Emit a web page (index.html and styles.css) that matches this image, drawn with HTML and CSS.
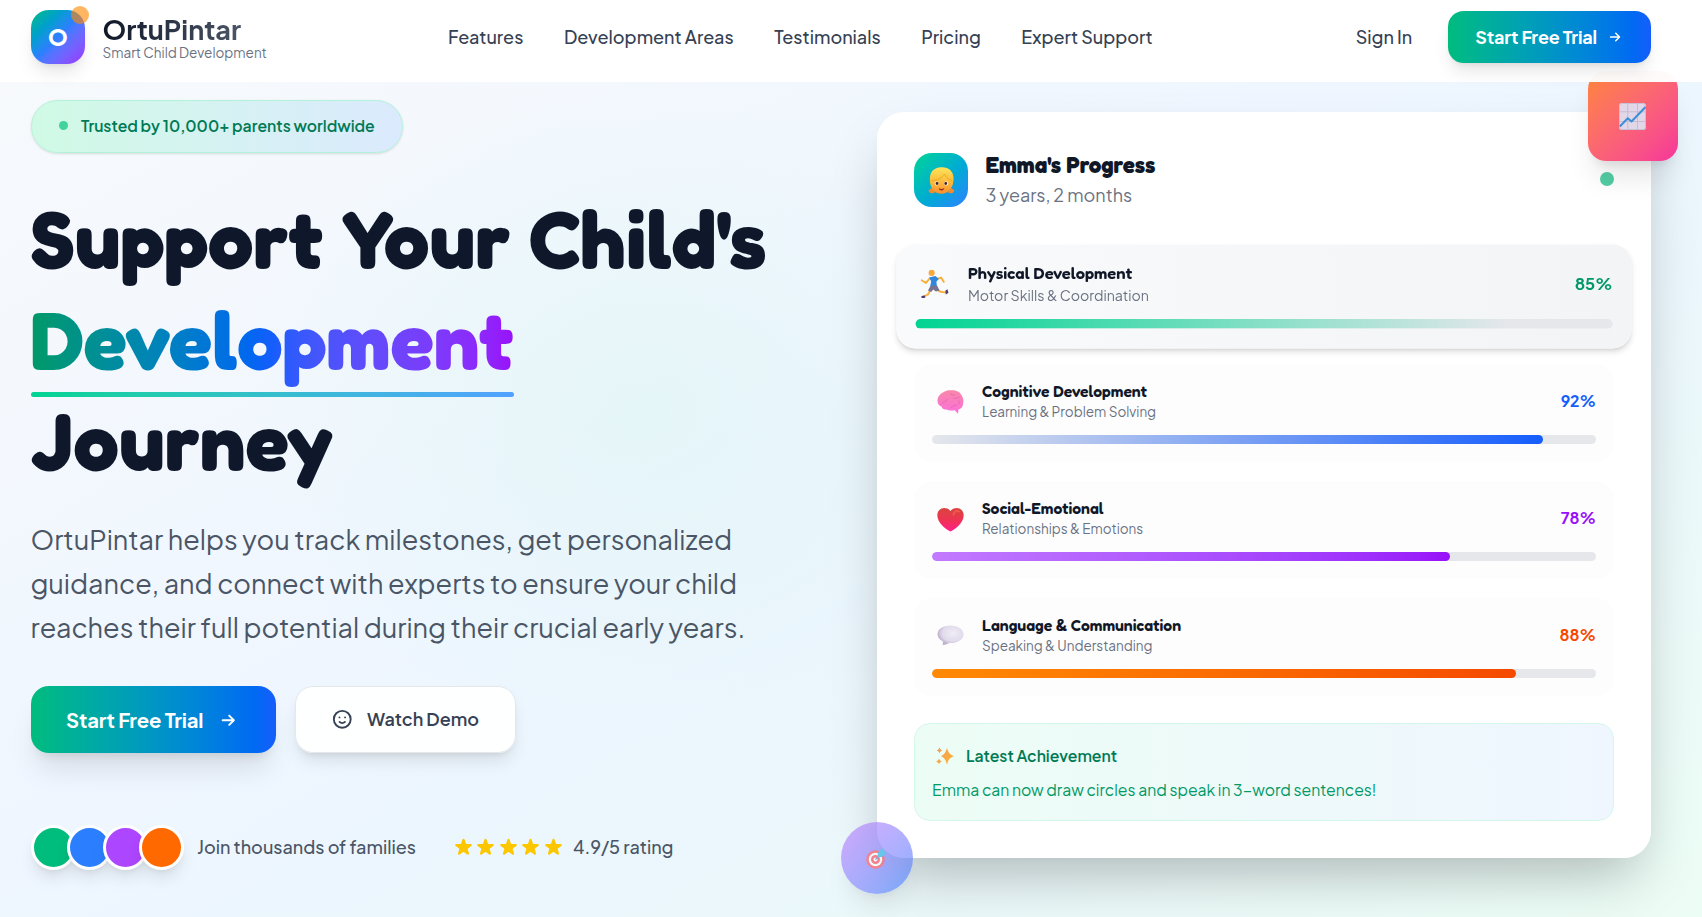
FILE: index.html
```html
<!DOCTYPE html>
<html lang="en">
<head>
<meta charset="utf-8">
<title>OrtuPintar</title>
<link rel="stylesheet" href="styles.css">
</head>
<body>
<header class="header">
  <a class="brand">
    <span class="brand-mark">O<span class="brand-dot"></span></span>
    <span class="brand-text">
      <span class="brand-name">OrtuPintar</span>
      <span class="brand-tag">Smart Child Development</span>
    </span>
  </a>
  <nav class="nav">
    <a>Features</a><a>Development Areas</a><a>Testimonials</a><a>Pricing</a><a>Expert Support</a>
  </nav>
  <div class="auth">
    <a class="signin">Sign In</a>
    <a class="btn btn-small">Start Free Trial
      <svg class="arrow" viewBox="0 0 24 24"><path d="M13 7l5 5m0 0l-5 5m5-5H6"/></svg>
    </a>
  </div>
</header>

<main class="hero">
  <section class="intro">
    <div class="badge"><span class="badge-dot"></span>Trusted by 10,000+ parents worldwide</div>
    <h1 class="title">Support Your Child's <span class="title-accent"><span class="title-gradient">Development</span></span><br>Journey</h1>
    <p class="lead">OrtuPintar helps you track milestones, get personalized guidance, and connect with experts to ensure your child reaches their full potential during their crucial early years.</p>
    <div class="actions">
      <a class="btn btn-large">Start Free Trial
        <svg class="arrow" viewBox="0 0 24 24"><path d="M13 7l5 5m0 0l-5 5m5-5H6"/></svg>
      </a>
      <a class="btn-outline">
        <svg class="smile" viewBox="0 0 24 24"><path d="M14.828 14.828a4 4 0 01-5.656 0M9 10h.01M15 10h.01M21 12a9 9 0 11-18 0 9 9 0 0118 0z"/></svg>
        Watch Demo
      </a>
    </div>
    <div class="proof">
      <div class="avatars"><i class="av av-green"></i><i class="av av-blue"></i><i class="av av-purple"></i><i class="av av-orange"></i></div>
      <span class="proof-text">Join thousands of families</span>
      <div class="stars">
        <svg viewBox="1.500 1.500 17 17"><path id="star" d="M9.049 2.927c.3-.921 1.603-.921 1.902 0l1.07 3.292a1 1 0 00.95.69h3.462c.969 0 1.371 1.24.588 1.81l-2.8 2.034a1 1 0 00-.364 1.118l1.07 3.292c.3.921-.755 1.688-1.54 1.118l-2.8-2.034a1 1 0 00-1.175 0l-2.8 2.034c-.784.57-1.838-.197-1.539-1.118l1.07-3.292a1 1 0 00-.364-1.118L2.98 8.72c-.783-.57-.38-1.81.588-1.81h3.461a1 1 0 00.951-.69l1.07-3.292z"/></svg>
        <svg viewBox="1.500 1.500 17 17"><use href="#star"/></svg>
        <svg viewBox="1.500 1.500 17 17"><use href="#star"/></svg>
        <svg viewBox="1.500 1.500 17 17"><use href="#star"/></svg>
        <svg viewBox="1.500 1.500 17 17"><use href="#star"/></svg>
      </div>
      <span class="rating">4.9/5 rating</span>
    </div>
  </section>

  <section class="card">
    <div class="card-head">
      <div class="child-avatar">
        <svg viewBox="0 0 27 27">
          <defs><linearGradient id="skin" x1="0" y1="0" x2="0" y2="1"><stop offset="0" stop-color="#ffd04a"/><stop offset="1" stop-color="#f98f2c"/></linearGradient>
          <linearGradient id="hair" x1="0" y1="0" x2="0" y2="1"><stop offset="0" stop-color="#ffe45c"/><stop offset="1" stop-color="#f5a623"/></linearGradient></defs>
          <path d="M5 20l-4.500 3.500c1 3 4 3.500 6.500 2zM22 20l4.500 3.500c-1 3-4 3.500-6.500 2z" fill="#f28a2e"/>
          <path d="M2 15C1 6 5 .5 13 .3 22-.2 27 6 25.200 15c-.3 4-2 6-3.500 7H5.500C3.500 21 2.300 18 2 15z" fill="url(#hair)"/>
          <path d="M3.300 14.500c4.500-.3 10.500-1.500 13-5.500 1.500 3 4 4.500 7.300 5 .8 7-3 12.700-10.200 12.700S2.700 21.500 3.300 14.500z" fill="url(#skin)"/>
          <path d="M3.500 13.500c6 0 11-2.500 13-6.500 1 3 4 5.500 7.500 6.500" fill="none" stroke="#f0a024" stroke-width=".8"/>
          <circle cx="8.600" cy="16.500" r="1.900" fill="#fff"/><circle cx="18.200" cy="16.500" r="1.900" fill="#fff"/>
          <circle cx="9" cy="16.500" r="1.400" fill="#3d2430"/><circle cx="17.800" cy="16.500" r="1.400" fill="#3d2430"/>
          <path d="M10.500 21q3 2 6 0-.8 2.500-3 2.500t-3-2.500z" fill="#8f2a2a"/>
        </svg>
      </div>
      <div class="child-info">
        <h2>Emma's Progress</h2>
        <p>3 years, 2 months</p>
      </div>
      <span class="status"></span>
    </div>

    <div class="areas">
      <article class="area area-active">
        <div class="area-top">
          <svg class="emoji" viewBox="0 0 27 27">
            <circle cx="10.500" cy="3" r="2.900" fill="#f7a93c"/>
            <path d="M8.500 8.500L5 12.500.900 10M15 9l4.500-1.500 2.500 4" fill="none" stroke="#fbb03b" stroke-width="1.900" stroke-linecap="round" stroke-linejoin="round"/>
            <path d="M10 18l-3 5.500-5 2.500M15 18.500l4 2.500 5.500.8" fill="none" stroke="#fbb03b" stroke-width="1.900" stroke-linecap="round" stroke-linejoin="round"/>
            <path d="M8 7.500l6-1.500 3.300 2.500-2.300 3 .5 4.500-6.500.5 1-5.500z" fill="#2f86dd"/>
            <path d="M9.300 15.500l6.300-.5 2.400 4.800-3.500 1-2.500-2-2 2.500-3-1.500z" fill="#77728f"/>
            <path d="M.700 25l3.300-.5.500 2-3.500 1.300zM23.500 20l2-1.300 1 3.300-2.500 1.500z" fill="#4a3f75"/>
          </svg>
          <div class="area-text"><h3>Physical Development</h3><p>Motor Skills &amp; Coordination</p></div>
          <b class="pct pct-green">85%</b>
        </div>
        <div class="track"><div class="fill fill-green" style="width:100%"></div></div>
      </article>
      <article class="area">
        <div class="area-top">
          <svg class="emoji" viewBox="0 0 27 27">
            <defs><linearGradient id="brain" x1="0" y1="0" x2="0" y2="1"><stop offset="0" stop-color="#f888a8"/><stop offset="1" stop-color="#fb70dc"/></linearGradient></defs>
            <path d="M.5 13C.5 8.500 3 6 6 4.500 8.500 2.500 12 2 15 2.300c4.500-.3 8.500 2 9.800 5.500 1.700 2.500 2 6 1.200 8.700-.5 3-2.500 4.700-4.500 5l-.5 4.300-3.300-3.500c-3 .5-6 .3-8-.7-3 .3-4.700-1-5.200-3C2 17.500.5 16 .5 13z" fill="url(#brain)"/>
            <path d="M5 15.500c1.500-2.500 4.500-2 5.500-4M13 5.500c1 1.500 3 2 4.500 1.200M17 10.500c2.500 0 3.500-1.500 5-1.200M14 19.500c2-.8 3-2.500 5.500-2.200M21.500 12.500c1 1 1 2.500.3 3.500" fill="none" stroke="#e45fae" stroke-width=".7" stroke-linecap="round"/>
          </svg>
          <div class="area-text"><h3>Cognitive Development</h3><p>Learning &amp; Problem Solving</p></div>
          <b class="pct pct-blue">92%</b>
        </div>
        <div class="track"><div class="fill fill-blue" style="width:92%"></div></div>
      </article>
      <article class="area">
        <div class="area-top">
          <svg class="emoji" viewBox="0 0 27 27">
            <defs><linearGradient id="heart" x1="0" y1="0" x2="0" y2="1"><stop offset="0" stop-color="#d8453f"/><stop offset=".5" stop-color="#ee3352"/><stop offset="1" stop-color="#ff1f8e"/></linearGradient></defs>
            <path d="M13.500 26.500C9 24.500.3 18 .3 10.200.3 6 3.500 3 7.200 3c2.800 0 5 1.200 6.300 3 1.300-1.800 3.500-3 6.300-3 3.700 0 6.900 3 6.900 7.200 0 7.800-8.700 14.300-13.200 16.300z" fill="url(#heart)"/>
            <path d="M16.500 9.500c.5-3 3-4.500 5.500-3" fill="none" stroke="#f0574f" stroke-width="2" stroke-linecap="round"/>
          </svg>
          <div class="area-text"><h3>Social-Emotional</h3><p>Relationships &amp; Emotions</p></div>
          <b class="pct pct-purple">78%</b>
        </div>
        <div class="track"><div class="fill fill-purple" style="width:78%"></div></div>
      </article>
      <article class="area">
        <div class="area-top">
          <svg class="emoji" viewBox="0 0 27 27">
            <defs><radialGradient id="bubble" cx=".6" cy=".4" r=".6"><stop offset="0" stop-color="#f1edf7"/><stop offset=".7" stop-color="#e0daea"/><stop offset="1" stop-color="#bdb0cd"/></radialGradient></defs>
            <path d="M13.500 3.500c7.500 0 13 3.800 13 8.800s-5.500 8.800-13 8.800l-2 .2c-1.500 1-3.500 1.800-6 1.700.6-1.200.7-2.500.3-3.700C2.500 17.800.5 15.200.5 12.300c0-5 5.500-8.800 13-8.800z" fill="url(#bubble)"/>
          </svg>
          <div class="area-text"><h3>Language &amp; Communication</h3><p>Speaking &amp; Understanding</p></div>
          <b class="pct pct-orange">88%</b>
        </div>
        <div class="track"><div class="fill fill-orange" style="width:88%"></div></div>
      </article>
    </div>

    <div class="achievement">
      <div class="achievement-title">
        <svg class="sparkles" viewBox="0 0 18 18">
          <defs><linearGradient id="spark" x1="0" y1="0" x2="1" y2="1"><stop offset="0" stop-color="#ef9a5e"/><stop offset="1" stop-color="#ffb52e"/></linearGradient></defs>
          <path d="M11 .8c1.300 4.700 2.500 6.700 7 8.500-4.500 1.700-5.700 3.500-7 8.500-1.300-5-2.500-6.800-6-8.500 3.500-1.800 4.700-3.800 6-8.500zM3.500.3c.7 2 1 2.500 3 3.200-2 .7-2.300 1-3 3-.7-2-1-2.300-3-3 2-.7 2.300-1.200 3-3.200zM3 11.300c.7 2 1 2.500 3 3.200-2 .7-2.300 1-3 3-.7-2-1-2.300-3-3 2-.7 2.300-1.200 3-3.200z" fill="url(#spark)"/>
        </svg>
        Latest Achievement
      </div>
      <p>Emma can now draw circles and speak in 3-word sentences!</p>
    </div>

    <div class="float-chart">
      <svg viewBox="0 0 27 27">
        <rect width="27" height="27" rx="3" fill="#e2d7e8"/>
        <path d="M8.800 0v27M18.500 0v27M0 8.800h27M0 18.500h27" stroke="#c9bbd2" stroke-width="1" fill="none"/>
        <rect x=".5" y=".5" width="26" height="26" rx="2.500" fill="none" stroke="#c9bfd4"/>
        <path d="M.800 23.500l8-8.300 3.700 3.300L26.500 4" fill="none" stroke="#3d8fd6" stroke-width="2" stroke-linejoin="round"/>
      </svg>
    </div>
    <div class="float-target">
      <svg viewBox="0 0 22 22">
        <circle cx="9.500" cy="12.500" r="9.300" fill="#ff4055"/><circle cx="9.500" cy="12.500" r="6.800" fill="#fff"/><circle cx="9.500" cy="12.500" r="4.500" fill="#ff4055"/><circle cx="9.500" cy="12.500" r="2" fill="#fff"/>
        <path d="M9.500 12.500L15 7" stroke="#5c6fb8" stroke-width="1.200"/>
        <path d="M11.500 10.500l.5-5L16.500 1l.8 3.200L21 5l-4.500 4.800z" fill="#22b4ea"/>
      </svg>
    </div>
  </section>
</main>
</body>
</html>
```
FILE: styles.css
```css
* { box-sizing: border-box; margin: 0; padding: 0; }

body {
  width: 1702px;
  height: 917px;
  overflow: hidden;
  font: 400 18px/27px "Plus Jakarta Sans", Inter, sans-serif;
  color: #4a5565;
  background:
    radial-gradient(ellipse 400px 330px at 640px 410px, rgba(208, 244, 236, .36), rgba(208, 244, 236, 0)),
    linear-gradient(150deg, #f8fafc 0%, #eff6ff 45%, #ebf6fd 62%, #ecfdf5 100%);
}

/* Header */
.header {
  position: relative;
  z-index: 2;
  display: flex;
  justify-content: space-between;
  align-items: center;
  height: 82px;
  padding: 0 51px 8px 31px;
  background: rgba(255, 255, 255, .97);
}
.brand { display: flex; align-items: center; gap: 17.5px; }
.brand-mark {
  position: relative;
  display: flex;
  align-items: center;
  justify-content: center;
  width: 54px;
  height: 54px;
  border-radius: 18px;
  background: linear-gradient(135deg in oklab, #00bc7d, #2b7fff 50%, #9b2cff);
  box-shadow: 0 11px 17px -3px rgba(0, 0, 0, .1), 0 4px 7px -4px rgba(0, 0, 0, .1);
  color: #fff;
  font-size: 22.5px;
  font-weight: 800;
}
.brand-dot {
  position: absolute;
  top: -4px;
  right: -4px;
  width: 18px;
  height: 18px;
  border-radius: 50%;
  background: #ff8904;
  opacity: .62;
}
.brand-text { display: flex; flex-direction: column; margin-top: 2px; }
.brand-name {
  font-size: 27px;
  line-height: 29px;
  font-weight: 700;
  color: transparent;
  background: linear-gradient(90deg, #101828, #4a5565);
  -webkit-background-clip: text;
  background-clip: text;
  align-self: flex-start;
}
.brand-tag { font-size: 13.5px; line-height: 18px; color: #6a7282; }
.nav { display: flex; gap: 40.5px; margin-bottom: 2px; font-weight: 500; color: #364153; }
.auth { display: flex; align-items: center; gap: 36px; padding-left: 22px; }
.signin { margin-bottom: 2px; font-weight: 500; color: #364153; }

.btn {
  display: flex;
  align-items: center;
  color: #fff;
  font-weight: 700;
  letter-spacing: -.14px;
  background: linear-gradient(90deg in oklab, #00bc7d, #155dfc);
}
.btn-small {
  height: 52px;
  padding: 0 27px 1px;
  gap: 9px;
  border-radius: 15.75px;
  box-shadow: 0 11px 17px -3px rgba(0, 0, 0, .1), 0 4px 7px -4px rgba(0, 0, 0, .1);
}
.btn-small .arrow { width: 18px; height: 18px; }
.arrow, .smile { fill: none; stroke: currentColor; stroke-width: 2; stroke-linecap: round; stroke-linejoin: round; }

/* Hero */
.hero {
  display: grid;
  grid-template-columns: 774.5px 774px;
  column-gap: 72px;
  padding: 18px 51px 0 30.5px;
  align-items: start;
}
.badge {
  display: inline-flex;
  align-items: center;
  height: 53px;
  padding: 0 27px 2px;
  gap: 13.5px;
  border: 1px solid #b2f2d8;
  border-radius: 27px;
  background: linear-gradient(90deg, #d0fae5, #dbeafe);
  box-shadow: 0 1px 3px rgba(0, 0, 0, .1), 0 1px 2px -1px rgba(0, 0, 0, .1);
  color: #007a55;
  font-size: 15.75px;
  font-weight: 600;
}
.badge-dot { width: 9px; height: 9px; border-radius: 50%; background: #42d29c; }
.title {
  margin-top: 34.500px;
  font: 700 81px/101.25px Fredoka, "Plus Jakarta Sans", sans-serif;
  color: #0f172b;
}
.title-accent { position: relative; display: inline-block; }
.title-gradient {
  display: block;
  color: transparent;
  background: linear-gradient(90deg in oklab, #009966, #155dfc 50%, #9810fa);
  -webkit-background-clip: text;
  background-clip: text;
}
.title-accent::after {
  content: "";
  position: absolute;
  left: 0;
  right: 0;
  bottom: -7px;
  height: 5px;
  border-radius: 3px;
  background: linear-gradient(90deg in oklab, #00d492, #51a2ff);
}
.lead { margin-top: 26.500px; font-size: 27px; line-height: 43.9px; width: 745px; }
.actions { display: flex; gap: 19px; margin-top: 37px; }
.btn-large {
  width: 245px;
  height: 67px;
  padding: 0 35.5px;
  gap: 14px;
  border-radius: 18px;
  font-size: 20.25px;
  box-shadow: 0 22px 28px -6px rgba(0, 0, 0, .1), 0 9px 11px -7px rgba(0, 0, 0, .1);
}
.btn-large .arrow, .smile { width: 22.5px; height: 22.5px; }
.btn-outline {
  display: flex;
  align-items: center;
  height: 67px;
  padding: 0 36px 2px 35.5px;
  gap: 13.5px;
  border: 1px solid #e5e7eb;
  border-radius: 18px;
  background: rgba(255, 255, 255, .92);
  box-shadow: 0 11px 17px -3px rgba(0, 0, 0, .1), 0 4px 7px -4px rgba(0, 0, 0, .1);
  color: #364153;
  font-weight: 600;
}
.proof { display: flex; align-items: center; margin-top: 72px; font-weight: 500; }
.avatars { display: flex; }
.av {
  width: 45px;
  height: 45px;
  border: 3px solid #fff;
  border-radius: 50%;
  box-shadow: 0 11px 17px -3px rgba(0, 0, 0, .1), 0 4px 7px -4px rgba(0, 0, 0, .1);
}
.av + .av { margin-left: -9px; }
.av-green { background: #00bc7d; }
.av-blue { background: #2b7fff; }
.av-purple { background: #ad46ff; }
.av-orange { background: #ff6900; }
.proof-text { margin: 0 0 2px 13.5px; }
.rating { margin-bottom: 2px; }
.stars { display: flex; gap: 3.5px; margin: 0 10px 0 38px; }
.stars svg { width: 19px; height: 19px; fill: #fdc700; }

/* Progress card */
.card {
  position: relative;
  height: 746px;
  margin-top: 12px;
  padding: 37px;
  border-radius: 27px;
  background: rgba(255, 255, 255, .97);
  box-shadow: 0 28px 56px -13px rgba(0, 0, 0, .27);
}
.card-head { display: flex; height: 62px; gap: 17.5px; margin-bottom: 35.5px; }
.child-avatar {
  display: flex;
  align-items: center;
  justify-content: center;
  width: 54px;
  height: 54px;
  margin-top: 4px;
  border-radius: 18px;
  background: linear-gradient(135deg in oklab, #00d492, #2b7fff);
}
.child-avatar svg { width: 27px; height: 27px; margin-top: 1px; }
.child-info { flex: 1; }
.child-info h2 { font: 700 22.5px/31.5px Fredoka, sans-serif; color: #101828; }
.child-info p { color: #6a7282; }
.status { width: 14px; height: 14px; margin-top: 23px; border-radius: 50%; background: #53cda4; }
.areas { display: flex; flex-direction: column; gap: 18.500px; }
.area { height: 98.5px; padding: 18px; border-radius: 18px; background: #fdfdfe; }
.area-active {
  transform: scale(1.05);
  background: linear-gradient(90deg, #f9fafb, #f3f4f6);
  box-shadow: 0 4px 6px -1px rgba(0, 0, 0, .12), 0 2px 4px -2px rgba(0, 0, 0, .12);
}
.area-top { display: flex; align-items: center; }
.emoji { width: 27px; height: 27px; margin: 0 18px 0 5px; }
.area-text { flex: 1; }
.area-text h3 { font: 600 15.75px/19.7px Fredoka, sans-serif; color: #101828; }
.area-text p { padding-top: 1px; margin-bottom: -1px; font-size: 13.5px; line-height: 20.25px; color: #6a7282; }
.pct { font-size: 15.75px; line-height: 20px; font-weight: 700; }
.area-active .pct { margin-bottom: 2px; }
.pct-green { color: #009966; }
.pct-blue { color: #155dfc; }
.pct-purple { color: #9810fa; }
.pct-orange { color: #f54900; }
.track { height: 9px; margin-top: 13.5px; border-radius: 5px; background: #e5e7eb; overflow: hidden; }
.fill { height: 9px; border-radius: 5px; }
.fill-green { background: linear-gradient(90deg, #00d492, rgba(0, 212, 146, 0) 85%); }
.fill-blue { background: linear-gradient(90deg, rgba(21, 93, 252, 0), #155dfc); }
.fill-purple { background: linear-gradient(90deg in oklab, #c27aff, #9810fa); }
.fill-orange { background: linear-gradient(90deg in oklab, #ff8904, #f54900); }

.achievement {
  height: 98px;
  margin-top: 27px;
  padding: 18px 18px 18px 17px;
  border: 1px solid #d5f7ea;
  border-radius: 15.75px;
  background: linear-gradient(90deg, #ecfdf5, #eff6ff);
  font-size: 15.75px;
  color: #009966;
}
.achievement-title { display: flex; align-items: center; gap: 12px; font-weight: 600; color: #007a55; }
.achievement p { margin-top: 6.500px; }
.sparkles { width: 18px; height: 18px; margin-left: 4px; }

.float-chart, .float-target { position: absolute; display: flex; align-items: center; justify-content: center; }
.float-chart {
  top: -41px;
  right: -27px;
  width: 90px;
  height: 90px;
  border-radius: 18px;
  background: linear-gradient(135deg in oklab, #ff8534, #f6339a);
  box-shadow: 0 22px 28px -6px rgba(0, 0, 0, .1), 0 9px 11px -7px rgba(0, 0, 0, .1);
}
.float-chart svg { width: 27px; height: 27px; margin-right: 1px; }
.float-target {
  left: -36px;
  bottom: -36px;
  width: 72px;
  height: 72px;
  border-radius: 50%;
  background: linear-gradient(135deg in oklab, #c27aff, #2b7fff);
  box-shadow: 0 22px 28px -6px rgba(0, 0, 0, .1), 0 9px 11px -7px rgba(0, 0, 0, .1);
  opacity: .62;
}
.float-target svg { width: 22px; height: 22px; margin-right: 1px; }
```
